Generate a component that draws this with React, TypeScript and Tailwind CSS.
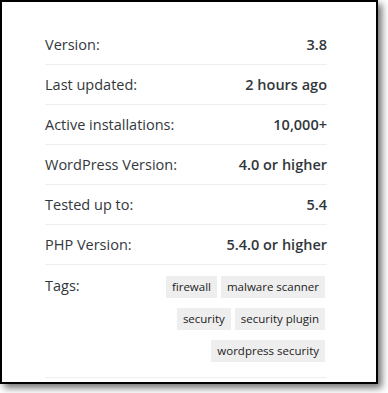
const rows: [string, string][] = [
  ["Version:", "3.8"],
  ["Last updated:", "2 hours ago"],
  ["Active installations:", "10,000+"],
  ["WordPress Version:", "4.0 or higher"],
  ["Tested up to:", "5.4"],
  ["PHP Version:", "5.4.0 or higher"],
];

const tags = ["firewall", "malware scanner", "security", "security plugin", "wordpress security"];

export default function App() {
  return (
    <div className="h-[393px] w-[388px] bg-white font-['Open_Sans',sans-serif]">
      <div className="h-[384px] w-[378px] border-2 border-black bg-white pt-[23px] pl-[43px] text-[#32373c] shadow-[4px_4px_7px_rgba(0,0,0,0.55)]">
        <ul className="w-[282px]">
          {rows.map(([label, value]) => (
            <li key={label} className="flex h-10 items-center justify-between border-b border-[#eeeeee] text-[14.5px]">
              <span>{label}</span>
              <span className="font-semibold">{value}</span>
            </li>
          ))}
          <li className="flex justify-between border-b border-[#eeeeee] pt-[11px] pb-[15px] text-[14.5px]">
            <span className="leading-5">Tags:</span>
            <div className="flex w-[200px] flex-wrap justify-end gap-y-[10px]">
              {tags.map((t) => (
                <span key={t} className="mx-[2px] flex h-[22px] items-center bg-[#eeeeee] px-[6px] text-[11.5px] text-[#222]">
                  {t}
                </span>
              ))}
            </div>
          </li>
        </ul>
      </div>
    </div>
  );
}
